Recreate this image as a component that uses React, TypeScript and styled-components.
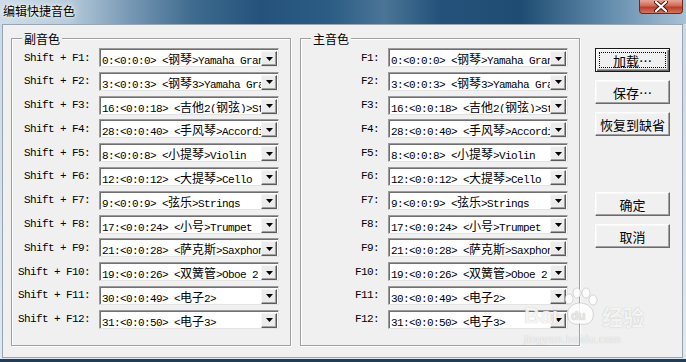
import styled, { createGlobalStyle } from "styled-components";

const voices = [
  "0:<0:0:0> <钢琴>Yamaha Grand Piano",
  "3:<0:0:3> <钢琴3>Yamaha Grand Piano",
  "16:<0:0:18> <吉他2(钢弦)>Steel Guitar",
  "28:<0:0:40> <手风琴>Accordion",
  "8:<0:0:8> <小提琴>Violin",
  "12:<0:0:12> <大提琴>Cello",
  "9:<0:0:9> <弦乐>Strings",
  "17:<0:0:24> <小号>Trumpet",
  "21:<0:0:28> <萨克斯>Saxphone",
  "19:<0:0:26> <双簧管>Oboe 2",
  "30:<0:0:49> <电子2>",
  "31:<0:0:50> <电子3>",
];

const GlobalStyle = createGlobalStyle`
  html, body {
    margin: 0;
    padding: 0;
  }
  body {
    width: 686px;
    height: 362px;
    overflow: hidden;
    background: #1c3b57;
    font-family: "Noto Sans CJK SC", sans-serif;
  }
`;

// splits a voice name so the Chinese runs get their own font size
const VoiceText: React.FC<{ text: string }> = ({ text }) => {
  const parts = text.split(/([\u4e00-\u9fff]+)/);
  return (
    <ComboText>
      {parts.map((p, i) => (i % 2 ? <Han key={i}>{p}</Han> : <span key={i}>{p}</span>))}
    </ComboText>
  );
};

const Combo: React.FC<{ value: string }> = ({ value }) => (
  <ComboBox>
    <VoiceText text={value} />
    <DropButton>
      <svg width="7" height="4" viewBox="0 0 7 4">
        <polygon points="0,0 7,0 3.5,4" fill="#000" />
      </svg>
    </DropButton>
  </ComboBox>
);

const VoiceGroup: React.FC<{ title: string; prefix: string }> = ({ title, prefix }) => (
  <Group>
    <GroupLabel>{title}</GroupLabel>
    <Rows>
      {voices.map((v, i) => (
        <Row key={i}>
          <KeyLabel>
            {prefix}F{i + 1}:
          </KeyLabel>
          <Combo value={v} />
        </Row>
      ))}
    </Rows>
  </Group>
);

const App: React.FC = () => {
  return (
    <>
      <GlobalStyle />
      <Window>
        <TitleBar>
          <Title>编辑快捷音色</Title>
          <CloseButton>
            <svg width="14" height="11" viewBox="0 0 14 11">
              <path
                d="M2 1 L12 10 M12 1 L2 10"
                stroke="#3a1a16"
                strokeWidth="4"
                strokeLinecap="round"
              />
              <path
                d="M2 1 L12 10 M12 1 L2 10"
                stroke="#ffffff"
                strokeWidth="2.2"
                strokeLinecap="round"
              />
            </svg>
          </CloseButton>
        </TitleBar>
        <FrameBody>
          <Client>
            <VoiceGroup title="副音色" prefix="Shift + " />
            <VoiceGroup title="主音色" prefix="" />
            <ButtonColumn>
              <DialogButton $default>加载…</DialogButton>
              <DialogButton>保存…</DialogButton>
              <DialogButton>恢复到缺省</DialogButton>
              <DialogButton $spaced>确定</DialogButton>
              <DialogButton>取消</DialogButton>
            </ButtonColumn>
            <Watermark>
              <WatermarkTop>
                <WmLatin>Bai</WmLatin>
                <svg width="40" height="40" viewBox="0 0 40 40">
                  <g fill="rgba(255,255,255,0.8)" stroke="rgba(150,150,150,0.35)" strokeWidth="1">
                    <ellipse cx="9" cy="12" rx="4" ry="5" />
                    <ellipse cx="17" cy="6" rx="4" ry="5" />
                    <ellipse cx="26" cy="6" rx="4" ry="5" />
                    <ellipse cx="33" cy="13" rx="4" ry="5" />
                    <path d="M8 30 C6 20 14 16 20 16 C27 16 35 21 33 30 C32 37 25 38 20 37 C14 38 9 36 8 30 Z" />
                  </g>
                  <text x="11" y="33" fontSize="12" fontWeight="bold" fill="#e6e6e6" fontFamily="Liberation Sans, sans-serif">
                    du
                  </text>
                </svg>
                <WmHan>经验</WmHan>
              </WatermarkTop>
              <WmUrl>jingyan.baidu.com</WmUrl>
            </Watermark>
          </Client>
        </FrameBody>
        <BottomFrame />
      </Window>
    </>
  );
};

const Window = styled.div`
  width: 686px;
  height: 362px;
  display: flex;
  flex-direction: column;
  background: linear-gradient(to bottom, #c9d9e6, #dfe9f1);
`;

const TitleBar = styled.div`
  height: 24px;
  flex-shrink: 0;
  display: flex;
  justify-content: space-between;
  align-items: flex-start;
  background: linear-gradient(
    to right,
    #cfdde8 0%,
    #b7cbdb 10%,
    #7d9db8 18%,
    #3f6b8f 28%,
    #24527a 38%,
    #2c5c84 48%,
    #4a7597 56%,
    #24527a 64%,
    #1f4c72 76%,
    #5f89aa 88%,
    #a8c1d5 100%
  );
`;

const Title = styled.div`
  padding: 3px 0 0 3px;
  font-size: 12px;
  line-height: 16px;
  color: #000;
  text-shadow: 0 0 6px #fff, 0 0 3px #fff;
`;

const CloseButton = styled.div`
  width: 44px;
  height: 14px;
  margin-right: 3px;
  box-sizing: border-box;
  border: 1px solid #6b2a20;
  border-top: none;
  border-radius: 0 0 4px 4px;
  background: linear-gradient(to bottom, #e7a597 0%, #d06a56 45%, #bf3b25 55%, #d4765f 100%);
  display: flex;
  align-items: center;
  justify-content: center;
`;

const FrameBody = styled.div`
  flex: 1;
  display: flex;
  padding: 0 3px 0 2px;
`;

const Client = styled.div`
  position: relative;
  flex: 1;
  box-sizing: border-box;
  border: 1px solid #97a5b2;
  background: #f0f0f0;
  display: flex;
  align-items: flex-start;
  padding: 13px 0 0 8px;
  gap: 9px;
`;

const Group = styled.div`
  position: relative;
  width: 280px;
  height: 308px;
  box-sizing: border-box;
  border: 1px solid #a0a0a0;
  box-shadow: inset 1px 1px #fff, 1px 1px #fff;
`;

const GroupLabel = styled.div`
  position: absolute;
  top: -8px;
  left: 10px;
  padding: 0 2px;
  background: #f0f0f0;
  font-size: 12px;
  line-height: 15px;
  color: #000;
`;

const Rows = styled.div`
  display: flex;
  flex-direction: column;
  gap: 4.8px;
  padding-top: 9px;
`;

const Row = styled.div`
  display: flex;
  align-items: center;
  height: 19px;
`;

const KeyLabel = styled.div`
  width: 78px;
  margin-right: 9px;
  text-align: right;
  font-family: "Liberation Mono", monospace;
  font-size: 11px;
  letter-spacing: -0.6px;
  color: #000;
  white-space: nowrap;
`;

const ComboBox = styled.div`
  display: flex;
  width: 180px;
  height: 19px;
  box-sizing: border-box;
  border: 1px solid;
  border-color: #9a9a9a #e3e3e3 #e3e3e3 #9a9a9a;
  box-shadow: inset 1px 1px #6f6f6f;
  background: #fff;
  padding: 2px 1px 1px 2px;
`;

const ComboText = styled.div`
  flex: 1;
  overflow: hidden;
  white-space: nowrap;
  font-family: "Liberation Mono", monospace;
  font-size: 11px;
  letter-spacing: -0.6px;
  line-height: 15px;
  color: #000;
`;

const Han = styled.span`
  font-family: "Noto Sans CJK SC", sans-serif;
  font-size: 12px;
  letter-spacing: 0;
`;

const DropButton = styled.div`
  width: 16px;
  height: 15px;
  flex-shrink: 0;
  box-sizing: border-box;
  border: 1px solid;
  border-color: #f6f6f6 #5a5a5a #5a5a5a #f6f6f6;
  box-shadow: inset -1px -1px #a0a0a0;
  background: #ececec;
  display: flex;
  align-items: center;
  justify-content: center;
`;

const ButtonColumn = styled.div`
  display: flex;
  flex-direction: column;
  gap: 8px;
  margin: 10px 0 0 6px;
`;

const DialogButton = styled.div<{ $default?: boolean; $spaced?: boolean }>`
  width: 75px;
  height: 24px;
  box-sizing: border-box;
  margin-top: ${(p) => (p.$spaced ? "48px" : "0")};
  border: 1px solid;
  border-color: ${(p) => (p.$default ? "#1a1a1a" : "#fff #6a6a6a #6a6a6a #fff")};
  box-shadow: ${(p) =>
    p.$default
      ? "inset 1px 1px #fff, inset -1px -1px #6a6a6a, inset -2px -2px #a0a0a0"
      : "inset -1px -1px #a0a0a0, inset 1px 1px #f8f8f8"};
  background: #f0f0f0;
  outline: ${(p) => (p.$default ? "1px dotted #000" : "none")};
  outline-offset: -5px;
  display: flex;
  align-items: center;
  justify-content: center;
  font-size: 13px;
  color: #000;
`;

const BottomFrame = styled.div`
  height: 4px;
  flex-shrink: 0;
  background: linear-gradient(to bottom, #dfe9f1 0, #dfe9f1 1px, #1d3d5b 1px);
`;

const Watermark = styled.div`
  position: absolute;
  left: 521px;
  top: 262px;
  display: flex;
  flex-direction: column;
  color: rgba(255, 255, 255, 0.85);
  text-shadow: 0 0 1px rgba(120, 120, 120, 0.5);
  pointer-events: none;
`;

const WatermarkTop = styled.div`
  display: flex;
  align-items: flex-end;
  gap: 2px;
`;

const WmLatin = styled.span`
  font-family: "Liberation Sans", sans-serif;
  font-size: 22px;
  font-weight: bold;
  line-height: 22px;
`;

const WmHan = styled.span`
  font-family: "Noto Sans CJK SC", sans-serif;
  font-size: 21px;
  font-weight: bold;
  line-height: 22px;
`;

const WmUrl = styled.span`
  margin-top: 6px;
  font-family: "Liberation Sans", sans-serif;
  font-size: 11px;
  letter-spacing: 0.5px;
`;

export default App;
